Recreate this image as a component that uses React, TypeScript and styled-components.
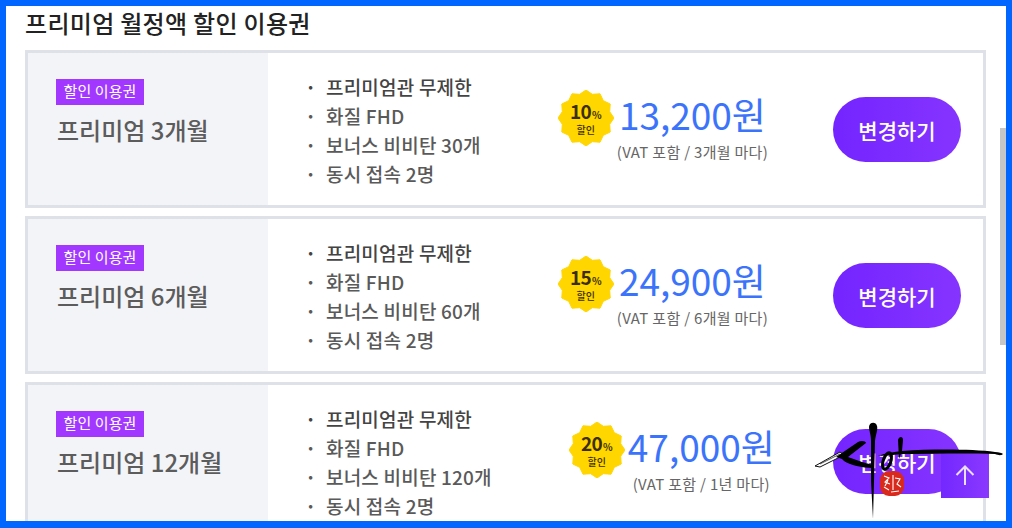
import React from "react";
import styled, { createGlobalStyle } from "styled-components";

const Global = createGlobalStyle`
  html, body { margin: 0; padding: 0; background: #fff; overflow: hidden; }
  body { font-family: "Noto Sans CJK KR", "Noto Sans", sans-serif; }
`;

const Frame = styled.div`
  position: relative;
  width: 1012px;
  height: 528px;
  box-sizing: border-box;
  border: solid #0066ff;
  border-width: 6px 6px 7px 6px;
  background: #fff;
  overflow: hidden;
`;

const Content = styled.main`
  display: flex;
  flex-direction: column;
  gap: 8px;
  padding: 0 0 0 19px;
  width: 961px;
`;

const Heading = styled.h2`
  margin: 0 0 2px 0;
  height: 34px;
  font-size: 24px;
  line-height: 34px;
  font-weight: 500;
  letter-spacing: 0.3px;
  color: #222;
  white-space: nowrap;
`;

const Card = styled.section`
  display: flex;
  flex: none;
  height: 158px;
  box-sizing: border-box;
  border: 3px solid #dfe1e9;
  padding-right: 22px;
`;

const Side = styled.div`
  flex: none;
  width: 240px;
  box-sizing: border-box;
  padding: 26px 0 0 28px;
  background: #f3f4f8;
`;

const Tag = styled.span`
  display: block;
  width: 88px;
  height: 26px;
  background: #a238ff;
  color: #fff;
  font-size: 15px;
  line-height: 24px;
  letter-spacing: 0.1px;
  text-align: center;
`;

const PlanName = styled.div`
  margin: 7px 0 0 1px;
  font-size: 24px;
  line-height: 36px;
  font-weight: 500;
  color: #5c5c5c;
  white-space: nowrap;
`;

const Features = styled.ul`
  flex: none;
  margin: 0 0 0 37px;
  padding: 19px 0 0 0;
  list-style: none;
`;

const Feature = styled.li<{ $strong?: boolean }>`
  display: flex;
  height: 29px;
  font-size: 19px;
  line-height: 29px;
  letter-spacing: 0.2px;
  color: ${(p) => (p.$strong ? "#444" : "#5a5a5a")};
  font-weight: 500;
  white-space: nowrap;
  &::before {
    content: "·";
    width: 21px;
    flex: none;
    font-weight: 700;
  }
`;

const PriceArea = styled.div`
  flex: none;
  margin-left: 77px;
  padding-top: 36px;
  display: flex;
  align-items: flex-start;
`;

const Badge = styled.div`
  position: relative;
  flex: none;
  width: 56px;
  height: 56px;
  margin: 1px 3px 0 0;
`;

const BadgeText = styled.div`
  position: absolute;
  inset: 0;
  display: flex;
  flex-direction: column;
  align-items: center;
  justify-content: center;
  color: #3d2e00;
`;

const BadgePercent = styled.span`
  font-size: 19px;
  font-weight: 700;
  line-height: 18px;
  letter-spacing: -0.8px;
  small { font-size: 10px; margin-left: 1px; letter-spacing: 0; }
`;

const BadgeLabel = styled.span`
  font-size: 10px;
  line-height: 11px;
  font-weight: 500;
`;

const PriceBox = styled.div`
  display: flex;
  flex-direction: column;
  align-items: center;
`;

const Price = styled.div`
  font-size: 37px;
  line-height: 50px;
  color: #3b74fb;
  height: 50px;
  white-space: nowrap;
`;

const PriceNote = styled.div`
  margin-top: 3px;
  font-size: 15px;
  line-height: 20px;
  letter-spacing: 0.3px;
  color: #666;
  white-space: nowrap;
`;

const Change = styled.button`
  flex: none;
  width: 128px;
  height: 65px;
  margin: 44px 0 0 auto;
  padding: 0;
  border: none;
  border-radius: 33px;
  background: linear-gradient(90deg, #7424ff, #8534ff);
  color: #fff;
  font-family: inherit;
  font-size: 21px;
  font-weight: 500;
`;

const Scrollbar = styled.div`
  position: absolute;
  top: 122px;
  right: 0;
  width: 6px;
  height: 217px;
  background: #c6c6c6;
`;

const TopButton = styled.button`
  position: absolute;
  left: 935px;
  top: 446px;
  width: 48px;
  height: 46px;
  padding: 0;
  border: none;
  background: linear-gradient(90deg, #7428ff, #8a38ff);
  display: flex;
  align-items: center;
  justify-content: center;
`;

const Signature = styled.svg`
  position: absolute;
  left: 806px;
  top: 415px;
  pointer-events: none;
`;

const BottomLine = styled.div`
  position: absolute;
  left: -6px;
  right: -6px;
  bottom: -7px;
  height: 1px;
  background: #002a70;
`;

function burst() {
  const pts: string[] = [];
  const n = 12;
  for (let i = 0; i < n * 2; i++) {
    const r = i % 2 === 0 ? 28 : 24.5;
    const a = (i * Math.PI) / n - Math.PI / 2;
    pts.push(`${(28 + r * Math.cos(a)).toFixed(1)},${(28 + r * Math.sin(a)).toFixed(1)}`);
  }
  return pts.join(" ");
}

const plans = [
  { name: "프리미엄 3개월", d: "10", bonus: "30개", price: "13,200원", note: "(VAT 포함 / 3개월 마다)" },
  { name: "프리미엄 6개월", d: "15", bonus: "60개", price: "24,900원", note: "(VAT 포함 / 6개월 마다)" },
  { name: "프리미엄 12개월", d: "20", bonus: "120개", price: "47,000원", note: "(VAT 포함 / 1년 마다)" },
];

export default function App() {
  return (
    <Frame>
      <Global />
      <Content>
        <Heading>프리미엄 월정액 할인 이용권</Heading>
        {plans.map((p) => (
          <Card key={p.name}>
            <Side>
              <Tag>할인 이용권</Tag>
              <PlanName>{p.name}</PlanName>
            </Side>
            <Features>
              <Feature $strong>프리미엄관 무제한</Feature>
              <Feature>화질 FHD</Feature>
              <Feature>보너스 비비탄 {p.bonus}</Feature>
              <Feature>동시 접속 2명</Feature>
            </Features>
            <PriceArea>
              <Badge>
                <svg width="56" height="56" viewBox="0 0 56 56">
                  <polygon points={burst()} fill="#ffd600" strokeLinejoin="round" stroke="#ffd600" />
                </svg>
                <BadgeText>
                  <BadgePercent>
                    {p.d}
                    <small>%</small>
                  </BadgePercent>
                  <BadgeLabel>할인</BadgeLabel>
                </BadgeText>
              </Badge>
              <PriceBox>
                <Price>{p.price}</Price>
                <PriceNote>{p.note}</PriceNote>
              </PriceBox>
            </PriceArea>
            <Change>변경하기</Change>
          </Card>
        ))}
      </Content>
      <Scrollbar />
      <TopButton aria-label="top">
        <svg width="22" height="22" viewBox="0 0 22 22" fill="none" stroke="#eadfff" strokeWidth="2">
          <path d="M11 21V2.5M2.5 11 11 2.5l8.5 8.5" />
        </svg>
      </TopButton>
      <Signature width="194" height="104" viewBox="0 0 194 104">
        <path d="M3 45 L28 31 L32 34 L8 46 Z" fill="#fff" stroke="#111" strokeWidth="1" />
        <path d="M8 43 L28 33" stroke="#111" strokeWidth="0.7" />
        <path d="M24 36 L46 21 C49 19 54 20 54 22 L36 36 L50 41 L61 44 L61 47 C50 47 38 44 32 40 L30 38 Z" fill="#000" />
        <rect x="68" y="50" width="24" height="25" rx="9" fill="#d9291c" />
        <path d="M72 55 l5 2 -4 4 5 2 M72 66 l5 3 M81 54 v15 M83 57 l5 1 -3 5 4 3 M79 71 l8 -1 M76 59 l-3 6" fill="none" stroke="#fff" strokeWidth="1.1" />
        <path d="M57 6 C57 1 64 0 65 5 C66 9 64 12 63 20 L62 60 L61 98 L59 60 L59 20 C59 13 57 10 57 6 Z" fill="#000" />
        <ellipse cx="75" cy="40" rx="3.8" ry="8.5" fill="none" stroke="#000" strokeWidth="3" transform="rotate(18 75 40)" />
        <path d="M86 19 C87 15 91 15 91 19 L90 30 L87 38 Z" fill="#000" />
        <path d="M66 35 C74 32 82 31 90 30 C120 28 160 28 183 31 C187 31 190 32 191 33 C189 35 186 34 183 33 C150 32 120 33 90 33 C80 34 72 35 66 35 Z" fill="#000" />
      </Signature>
      <BottomLine />
    </Frame>
  );
}
